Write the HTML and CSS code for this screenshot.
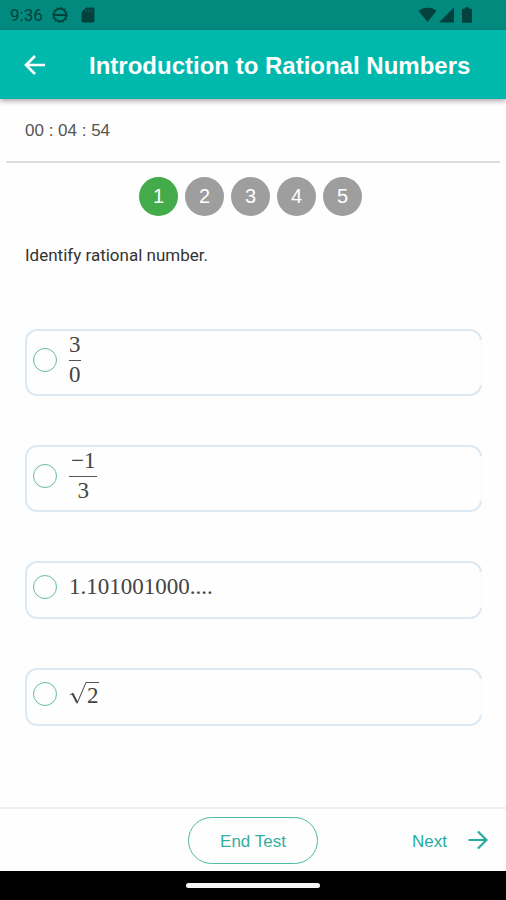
FILE: index.html
```html
<!DOCTYPE html>
<html lang="en">
<head>
  <meta charset="UTF-8">
  <meta name="viewport" content="width=device-width, initial-scale=1.0">
  <title>Introduction to Rational Numbers</title>
  <link rel="stylesheet" href="styles.css">
</head>
<body>
  <div class="status-bar">
    <span class="clock">9:36</span>
    <svg class="status-icon" width="18" height="18" viewBox="0 0 18 18">
      <circle cx="9" cy="9" r="6.3" fill="none" stroke="currentColor" stroke-width="1.8"/>
      <circle cx="9" cy="9" r="7.4" fill="none" stroke="currentColor" stroke-width="1.2" stroke-dasharray="1.6 2.3"/>
      <path d="M2 9h14" stroke="currentColor" stroke-width="2"/>
    </svg>
    <svg class="status-icon card-icon" width="14" height="18" viewBox="0 0 14 18">
      <path d="M5.2 1.5H12a1.4 1.4 0 0 1 1.4 1.4v12.2a1.4 1.4 0 0 1-1.4 1.4H2a1.4 1.4 0 0 1-1.4-1.4V6.2z" fill="currentColor"/>
      <path d="M5.3 3.6v2.2M7.9 3.6v2.2M10.5 3.6v2.2" stroke="#028a7e" stroke-width="0.7"/>
    </svg>
    <svg class="status-icon signal-icons" width="56" height="18" viewBox="0 0 56 18">
      <path d="M0.5 4.8C5.5 0.6 13.5 0.6 18.5 4.8L9.5 16z" fill="currentColor"/>
      <path d="M21 16.5L36 1.5v15z" fill="currentColor"/>
      <path d="M47 1.2h4v1.6h2a1 1 0 0 1 1 1v12a1 1 0 0 1-1 1h-8a1 1 0 0 1-1-1v-12a1 1 0 0 1 1-1h2z" fill="currentColor"/>
    </svg>
  </div>

  <header class="app-bar">
    <button type="button" class="back-button" aria-label="Back">
      <svg width="22" height="22" viewBox="0 0 22 22">
        <path d="M21 11H2.5M11 2L2 11l9 9" fill="none" stroke="currentColor" stroke-width="2.6"/>
      </svg>
    </button>
    <h1 class="title">Introduction to Rational Numbers</h1>
  </header>

  <main class="content">
    <div class="timer">00 : 04 : 54</div>

    <nav class="question-nav">
      <button type="button" class="question-number current">1</button>
      <button type="button" class="question-number">2</button>
      <button type="button" class="question-number">3</button>
      <button type="button" class="question-number">4</button>
      <button type="button" class="question-number">5</button>
    </nav>

    <form class="question">
      <p class="question-text">Identify rational number.</p>

      <label class="option tall">
        <input type="radio" name="answer" value="1">
        <span class="fraction">
          <span class="numerator">3</span>
          <span class="denominator">0</span>
        </span>
      </label>

      <label class="option tall">
        <input type="radio" name="answer" value="2">
        <span class="fraction">
          <span class="numerator wide">−1</span>
          <span class="denominator">3</span>
        </span>
      </label>

      <label class="option">
        <input type="radio" name="answer" value="3">
        <span class="number">1.101001000....</span>
      </label>

      <label class="option">
        <input type="radio" name="answer" value="4">
        <span class="root">
          <svg width="18" height="24" viewBox="0 0 18 24">
            <path d="M1 14l3-2" fill="none" stroke="currentColor" stroke-width="1"/>
            <path d="M3.5 12.5L8 21.5" fill="none" stroke="currentColor" stroke-width="2"/>
            <path d="M8 22.5L17 1.5h1" fill="none" stroke="currentColor" stroke-width="1"/>
          </svg>
          <span class="radicand">2</span>
        </span>
      </label>
    </form>
  </main>

  <footer class="bottom-bar">
    <button type="button" class="end-button">End Test</button>
    <button type="button" class="next-button">
      <span class="next-text">Next</span>
      <svg width="20" height="20" viewBox="0 0 20 20">
        <path d="M0.5 10H18M10 1.500L18.500 10l-8.500 8.500" fill="none" stroke="currentColor" stroke-width="2.200"/>
      </svg>
    </button>
  </footer>
  <div class="system-bar">
    <div class="home-handle"></div>
  </div>
</body>
</html>
```
FILE: styles.css
```css
* {
  box-sizing: border-box;
}
body {
  margin: 0;
  min-height: 100vh;
  display: flex;
  flex-direction: column;
  background-color: #fefefe;
  font-family: "Liberation Sans", Arial, sans-serif;
}
button {
  padding: 0;
  border: none;
  background: none;
  font-family: inherit;
  cursor: pointer;
}
svg {
  display: block;
}

/* status bar */
.status-bar {
  height: 30px;
  padding: 0 32px 0 10px;
  display: flex;
  align-items: center;
  background-color: #028a7e;
  color: #04403c;
}
.clock {
  margin-right: 8px;
  font-family: Roboto, sans-serif;
  font-size: 17px;
}
.card-icon {
  margin-left: 12px;
}
.signal-icons {
  margin-left: auto;
}

/* app bar */
.app-bar {
  height: 69px;
  padding: 0 24px;
  display: flex;
  align-items: center;
  gap: 43px;
  background-color: #00b8ab;
  color: #ffffff;
  box-shadow: 0 2px 5px rgba(60, 20, 40, 0.4);
}
.back-button {
  color: #ffffff;
}
.title {
  margin: 0;
  padding-top: 3px;
  font-size: 24px;
  font-weight: bold;
  white-space: nowrap;
}

/* question area */
.content {
  flex: 1;
}
.timer {
  margin: 0 6px;
  padding: 21px 19px 19px;
  border-bottom: 2px solid #dcdcdc;
  color: #555555;
  font-size: 17px;
  line-height: 22px;
}
.question-nav {
  padding-top: 14px;
  margin-right: 5px;
  display: flex;
  justify-content: center;
  gap: 7px;
}
.question-number {
  width: 39px;
  height: 39px;
  border-radius: 50%;
  background-color: #9e9e9e;
  color: #ffffff;
  font-size: 20px;
}
.question-number.current {
  background-color: #43ab49;
}
.question {
  padding: 28px 24px 0 25px;
  display: flex;
  flex-direction: column;
  gap: 49px;
}
.question-text {
  margin: 0 0 14px;
  color: #333333;
  font-family: Roboto, sans-serif;
  font-size: 17px;
  line-height: 22px;
}
.option {
  position: relative;
  min-height: 58px;
  padding: 4px 6px 10px;
  display: flex;
  align-items: center;
  gap: 12px;
  border: 2px solid #dbe9f5;
  border-radius: 12px;
  color: #444444;
  font-family: "Liberation Serif", "Times New Roman", serif;
  font-size: 23px;
  cursor: pointer;
}
/* fades the straight part of the right edge */
.option::after {
  content: "";
  position: absolute;
  top: 9px;
  bottom: 9px;
  right: -2px;
  width: 2px;
  background-color: #fafcfd;
}
.option.tall {
  min-height: 67px;
  padding: 1px 6px 6px;
}
.option input {
  appearance: none;
  flex: none;
  width: 24px;
  height: 24px;
  margin: 0;
  border: 1px solid #62bca6;
  border-radius: 50%;
}
.option input:checked {
  background-color: #00b8ab;
}
.fraction {
  display: flex;
  flex-direction: column;
  text-align: center;
  line-height: 26px;
}
.numerator {
  padding-bottom: 2px;
  border-bottom: 1px solid #555555;
}
.numerator.wide {
  padding: 0 2px 2px;
}
.denominator {
  padding-top: 1px;
}
.root {
  display: flex;
}
.radicand {
  margin-top: 1px;
  border-top: 1px solid #555555;
  line-height: 25px;
}

/* bottom bar */
.bottom-bar {
  height: 64px;
  padding: 0 18px;
  display: grid;
  grid-template-columns: 1fr auto 1fr;
  align-items: center;
  border-top: 2px solid #eeeeee;
}
.end-button {
  grid-column: 2;
  width: 130px;
  height: 47px;
  padding-top: 3px;
  border: 1px solid #4fb9a2;
  border-radius: 24px;
  color: #35ad9d;
  font-size: 17px;
}
.next-button {
  justify-self: end;
  display: flex;
  align-items: center;
  gap: 21px;
  color: #25ac9f;
  font-size: 17px;
}
.next-text {
  padding-top: 3px;
}
.system-bar {
  height: 29px;
  display: flex;
  align-items: center;
  justify-content: center;
  background-color: #000000;
}
.home-handle {
  width: 134px;
  height: 5px;
  border-radius: 3px;
  background-color: #f5f5f5;
}
```
